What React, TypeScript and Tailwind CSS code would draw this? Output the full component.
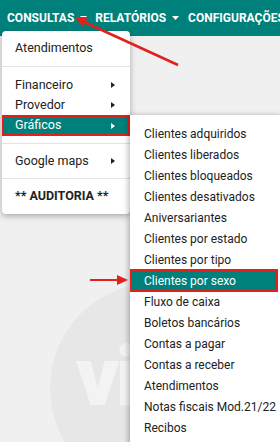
const font = { fontFamily: "Roboto, 'Liberation Sans', sans-serif" };

function Caret({ white = false }: { white?: boolean }) {
  return (
    <svg width="4" height="6" viewBox="0 0 4 6" className="shrink-0">
      <path d="M0 0 L4 3 L0 6 Z" fill={white ? "#ffffff" : "#222222"} />
    </svg>
  );
}

function DownCaret() {
  return (
    <svg width="7" height="4" viewBox="0 0 7 4" className="ml-[6px] shrink-0">
      <path d="M0 0 L7 0 L3.5 4 Z" fill="#ffffff" />
    </svg>
  );
}

const subItems = [
  "Clientes adquiridos",
  "Clientes liberados",
  "Clientes bloqueados",
  "Clientes desativados",
  "Aniversariantes",
  "Clientes por estado",
  "Clientes por tipo",
  "Clientes por sexo",
  "Fluxo de caixa",
  "Boletos bancários",
  "Contas a pagar",
  "Contas a receber",
  "Atendimentos",
  "Notas fiscais Mod.21/22",
  "Recibos",
];

export default function App() {
  return (
    <div
      className="relative h-[442px] w-[280px] overflow-hidden bg-[#f0f0f0]"
      style={font}
    >
      {/* top navigation */}
      <nav className="flex h-[36px] items-center whitespace-nowrap bg-[#00807a] pl-[7px] text-[12px] font-bold text-white">
        <span className="flex items-center">
          CONSULTAS
          <DownCaret />
        </span>
        <span className="ml-[8px] flex items-center">
          RELATÓRIOS
          <DownCaret />
        </span>
        <span className="ml-[9px]">CONFIGURAÇÕES</span>
      </nav>

      {/* watermark */}
      <div className="absolute left-[50px] top-[283px] flex h-[210px] w-[210px] items-start rounded-full bg-[#e7e7e7]">
        <span className="ml-[26px] mt-[52px] text-[84px] font-black leading-none tracking-[-4px] text-[#f3f3f3]">
          vi
        </span>
      </div>

      {/* main dropdown */}
      <div className="absolute left-[2px] top-[31px] w-[128px] rounded-[4px] bg-white pb-[8px] pt-[7px] text-[12.5px] text-[#222] shadow-[0_2px_6px_rgba(0,0,0,0.3)]">
        <div className="flex h-[20px] items-center px-[13px]">Atendimentos</div>
        <div className="my-[8px] h-px bg-[#e2e2e2]" />
        <div className="flex h-[20px] items-center justify-between pl-[13px] pr-[15px]">
          Financeiro
          <Caret />
        </div>
        <div className="flex h-[20px] items-center justify-between pl-[13px] pr-[15px]">
          Provedor
          <Caret />
        </div>
        <div className="flex h-[21px] items-center justify-between border-2 border-[#e3201b] bg-[#00807a] pl-[11px] pr-[13px] text-white">
          Gráficos
          <Caret white />
        </div>
        <div className="my-[7px] h-px bg-[#e2e2e2]" />
        <div className="flex h-[20px] items-center justify-between pl-[13px] pr-[15px]">
          Google maps
          <Caret />
        </div>
        <div className="my-[7px] h-px bg-[#e2e2e2]" />
        <div className="flex h-[20px] items-center px-[13px] font-bold">
          ** AUDITORIA **
        </div>
      </div>

      {/* submenu */}
      <div className="absolute left-[130px] top-[115px] h-[340px] w-[152px] bg-white pt-[8px] text-[12px] text-[#222] shadow-[-2px_0_5px_rgba(0,0,0,0.25)]">
        {subItems.map((s) =>
          s === "Clientes por sexo" ? (
            <div
              key={s}
              className="mr-[4px] flex h-[23px] -my-px items-center border-2 border-[#e3201b] bg-[#00807a] pl-[12px] text-white"
            >
              {s}
            </div>
          ) : (
            <div key={s} className="flex h-[21px] items-center pl-[14px]">
              {s}
            </div>
          )
        )}
      </div>

      {/* annotation arrows */}
      <svg
        className="pointer-events-none absolute left-0 top-0"
        width="280"
        height="442"
        viewBox="0 0 280 442"
      >
        <line x1="178" y1="65" x2="82" y2="21" stroke="#e3201b" strokeWidth="2.5" />
        <path d="M74 17 L88 17 L83 27 Z" fill="#e3201b" />
        <line x1="90" y1="280" x2="120" y2="280" stroke="#e3201b" strokeWidth="2" />
        <path d="M128 280 L117 275 L117 285 Z" fill="#e3201b" />
      </svg>
    </div>
  );
}
